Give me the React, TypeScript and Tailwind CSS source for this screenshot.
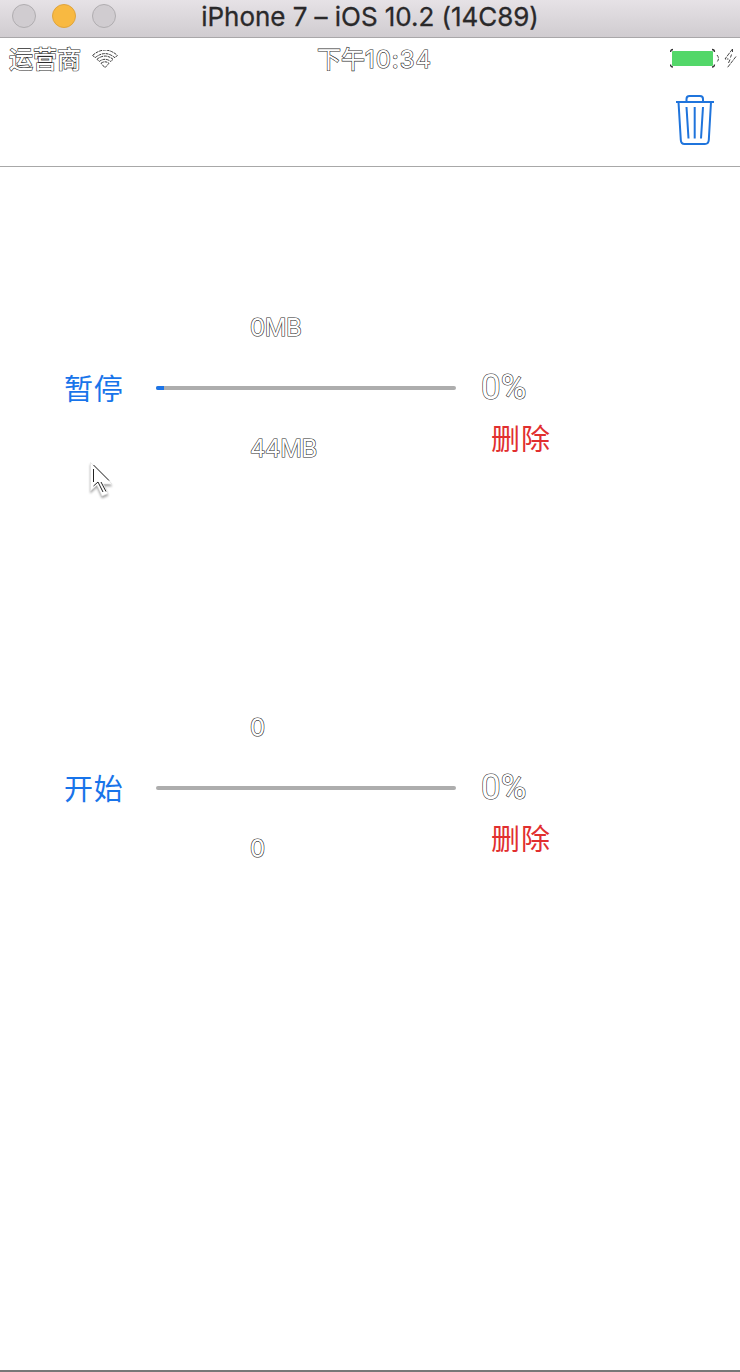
const outline =
  "text-white [-webkit-text-stroke:1.2px_#2c2c2c] [paint-order:stroke_fill]";

function TitleBar() {
  return (
    <header className="relative flex h-[38px] items-center justify-center border-b border-[#a9a7a9] bg-linear-to-b from-[#e6e2e6] to-[#d0ccd0]">
      <div className="absolute top-1 left-3 flex gap-4">
        <span className="size-6 rounded-full border border-[#b0adb0] bg-[#d0ccd0]" />
        <span className="size-6 rounded-full border border-[#dfa43d] bg-[#f8b941]" />
        <span className="size-6 rounded-full border border-[#b0adb0] bg-[#d0ccd0]" />
      </div>
      <h1 className="pb-1 text-[26px] leading-8 tracking-[-0.05px] whitespace-nowrap text-[#2a292a] [-webkit-text-stroke:0.3px_#2a292a]">
        iPhone 7 – iOS 10.2 (14C89)
      </h1>
    </header>
  );
}

function WifiIcon() {
  return (
    <svg className="h-[20px] w-[26px]" viewBox="0 1 26 20" fill="none" stroke="#222" strokeWidth="0.9" strokeDasharray="3 0.8">
      <path d="M.7 6.3Q13-4.2 25.3 6.3L23 8.8Q13 .4 3 8.8Z" />
      <path d="M5 10.3Q13 3.8 21 10.3L18.8 12.5Q13 8.1 7.2 12.5Z" />
      <path d="M9 14.3Q13 11.3 17 14.3L13 18.7Z" />
    </svg>
  );
}

function StatusBar() {
  return (
    <div className="grid h-10 grid-cols-3 items-center pt-0.5">
      <div className="flex items-center gap-[11px] pl-[9px]">
        <span className={`text-2xl leading-10 font-medium ${outline}`}>运营商</span>
        <WifiIcon />
      </div>
      <span className={`pl-[9px] text-center text-2xl leading-10 whitespace-nowrap ${outline}`}>
        下午<span className="tracking-[1px]">10:34</span>
      </span>
      <svg className="h-6 w-[70px] justify-self-end" viewBox="670 48 70 24" fill="none">
        <rect x="672" y="51" width="41" height="15" rx="1" fill="#53d769" />
        <path
          d="M670.5 52Q670.5 49.5 673 49.5M712 49.5Q714.5 49.5 714.5 52M714.5 64.5Q714.5 67 712 67M673 67Q670.5 67 670.5 64.5"
          stroke="#333"
          strokeWidth="1.3"
        />
        <path d="M717 55Q720 58.5 717 62" stroke="#444" strokeDasharray="3 1" />
        <path
          d="M732.5 49L725 59H728.5M736 56.5L727.5 67.5M732.5 49V52M731.5 54.5L730.5 57.5M730 59.5L728.5 63"
          stroke="#333"
          strokeWidth="0.9"
          strokeDasharray="4 0.8"
        />
      </svg>
    </div>
  );
}

function TrashIcon() {
  return (
    <svg className="h-[52px] w-10" viewBox="0 0 40 52" fill="none" stroke="#1f74dc" strokeWidth="2">
      <path d="M1 8H39M11.5 8V5Q11.5 2 14.5 2H25Q28 2 28 5V8" />
      <path d="M3.5 8L5.8 46Q6 50 9.5 50H30Q33.5 50 33.8 46L36 8" />
      <path d="M11.5 13L13.5 44.5M19.7 13V44.5M28 13L26 44.5" />
    </svg>
  );
}

function Cursor() {
  return (
    <svg
      className="absolute top-[461px] left-[88px] h-10 w-7 drop-shadow-[0_2px_1px_rgba(0,0,0,0.35)]"
      viewBox="0 0 28 40"
    >
      <path d="M2.5 1.5V30L9 24L14 35L20 32.5L15.5 23H24Z" fill="#fff" stroke="#e2e2e2" strokeWidth="0.7" />
      <path d="M5.5 4L21 19.5M5.5 8V21M5.5 25L10 21L15 31M13 21L18 30.5" fill="none" stroke="#222" strokeWidth="1" />
    </svg>
  );
}

type Download = {
  id: number;
  action: string;
  received: string;
  total: string;
  percent: string;
  started: boolean;
};

const downloads: Download[] = [
  { id: 1, action: "暂停", received: "0MB", total: "44MB", percent: "0%", started: true },
  { id: 2, action: "开始", received: "0", total: "0", percent: "0%", started: false },
];

function DownloadRow({ item }: { item: Download }) {
  return (
    <section className="flex h-[400px] items-start pt-[131px] pl-16">
      <button className="mt-[61px] h-[60px] w-[92px] text-left text-[29px] leading-[62px] tracking-[0.8px] text-[#1874ea]">
        {item.action}
      </button>
      <div className="w-[300px]">
        <p className={`h-[60px] pl-[94px] text-2xl leading-[60px] tracking-[-0.4px] ${outline}`}>{item.received}</p>
        <div className="flex h-[60px] items-center">
          <div className="h-1 w-full overflow-hidden rounded-sm bg-[#adadad]">
            {item.started && <div className="h-full w-2 bg-[#1b74e8]" />}
          </div>
        </div>
        <p className={`h-[60px] pl-[94px] text-2xl leading-[62px] tracking-[-0.4px] ${outline}`}>{item.total}</p>
      </div>
      <div className="pt-[60px] pl-[25px]">
        <p className={`h-[60px] font-[Roboto,sans-serif] text-[35px] leading-[60px] ${outline}`}>{item.percent}</p>
        <button className="ml-[10px] block h-10 text-[29px] leading-[44px] tracking-[1px] text-[#e12f2f]">删除</button>
      </div>
    </section>
  );
}

export default function App() {
  return (
    <div className="relative flex h-[1372px] w-[740px] flex-col overflow-hidden border-b-2 border-[#777] bg-white font-['Inter','Noto_Sans_CJK_SC',sans-serif]">
      <TitleBar />
      <StatusBar />
      <nav className="flex h-[89px] items-start justify-end border-b border-[#a8a8a8] pt-4 pr-[25px]">
        <button aria-label="Delete all">
          <TrashIcon />
        </button>
      </nav>
      <main className="flex-1">
        {downloads.map((item) => (
          <DownloadRow key={item.id} item={item} />
        ))}
      </main>
      <Cursor />
    </div>
  );
}
